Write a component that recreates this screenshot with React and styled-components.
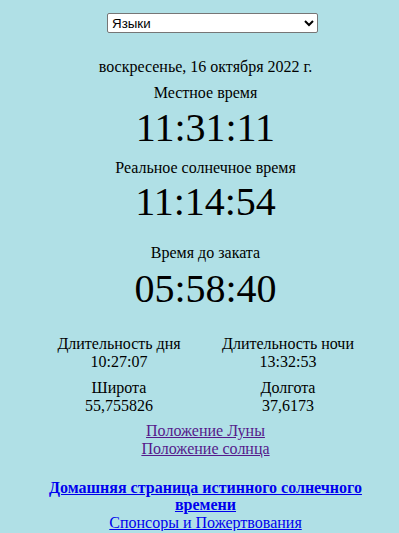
import React from 'react'
import styled, { createGlobalStyle } from 'styled-components'

const GlobalStyle = createGlobalStyle`
  html, body {
    margin: 0;
    background: #b0e0e6;
  }
  body {
    font-family: "Liberation Serif", "Times New Roman", serif;
    font-size: 16px;
    color: #000;
  }
`

const Page = styled.div`
  display: flex;
  flex-direction: column;
  align-items: center;
  padding: 13px 0 0 12px;
  text-align: center;
`

const LangSelect = styled.select`
  width: 211px;
  height: 20px;
  margin-left: 14px;
  font-family: "Liberation Sans", Arial, sans-serif;
  font-size: 13.33px;
  background: #fff;
  color: #000;
  border: 1px solid #767676;
  border-radius: 2px;
`

const DateLine = styled.div`
  margin-top: 25px;
  line-height: 18px;
`

const Label = styled.div`
  margin-top: ${(p) => p.$gap}px;
  line-height: 18px;
`

const BigTime = styled.div`
  margin-top: ${(p) => p.$gap}px;
  font-size: 40px;
  line-height: 46px;
`

const Stats = styled.div`
  margin-top: 23px;
  display: grid;
  grid-template-columns: 165px 173px;
  row-gap: 8.6px;
  line-height: 17.6px;
`

const Stat = styled.div`
  display: flex;
  flex-direction: column;
  align-items: center;
`

const Links = styled.div`
  margin-top: ${(p) => p.$gap}px;
  width: ${(p) => p.$width || 'auto'};
  display: flex;
  flex-direction: column;
  align-items: center;
  line-height: 17.6px;
`

const TextLink = styled.a`
  color: ${(p) => (p.$visited ? '#551a8b' : '#0000ee')};
  font-weight: ${(p) => (p.$bold ? 700 : 400)};
  text-decoration: underline;
`

const stats = [
  ['Длительность дня', '10:27:07'],
  ['Длительность ночи', '13:32:53'],
  ['Широта', '55,755826'],
  ['Долгота', '37,6173'],
]

export default function App() {
  return (
    <>
      <GlobalStyle />
      <Page>
        <LangSelect defaultValue="">
          <option value="">Языки</option>
          <option value="en">English</option>
          <option value="de">Deutsch</option>
        </LangSelect>

        <DateLine>воскресенье, 16 октября 2022 г.</DateLine>

        <Label $gap={7.6}>Местное время</Label>
        <BigTime $gap={3.3}>11:31:11</BigTime>

        <Label $gap={8.4}>Реальное солнечное время</Label>
        <BigTime $gap={2}>11:14:54</BigTime>

        <Label $gap={19}>Время до заката</Label>
        <BigTime $gap={4}>05:58:40</BigTime>

        <Stats>
          {stats.map(([title, value]) => (
            <Stat key={title}>
              <span>{title}</span>
              <span>{value}</span>
            </Stat>
          ))}
        </Stats>

        <Links $gap={8.2}>
          <TextLink href="#moon" $visited>Положение Луны</TextLink>
          <TextLink href="#sun" $visited>Положение солнца</TextLink>
        </Links>

        <Links $gap={21} $width="330px">
          <TextLink href="#home" $bold>Домашняя страница истинного солнечного времени</TextLink>
          <TextLink href="#sponsors">Спонсоры и Пожертвования</TextLink>
        </Links>
      </Page>
    </>
  )
}
